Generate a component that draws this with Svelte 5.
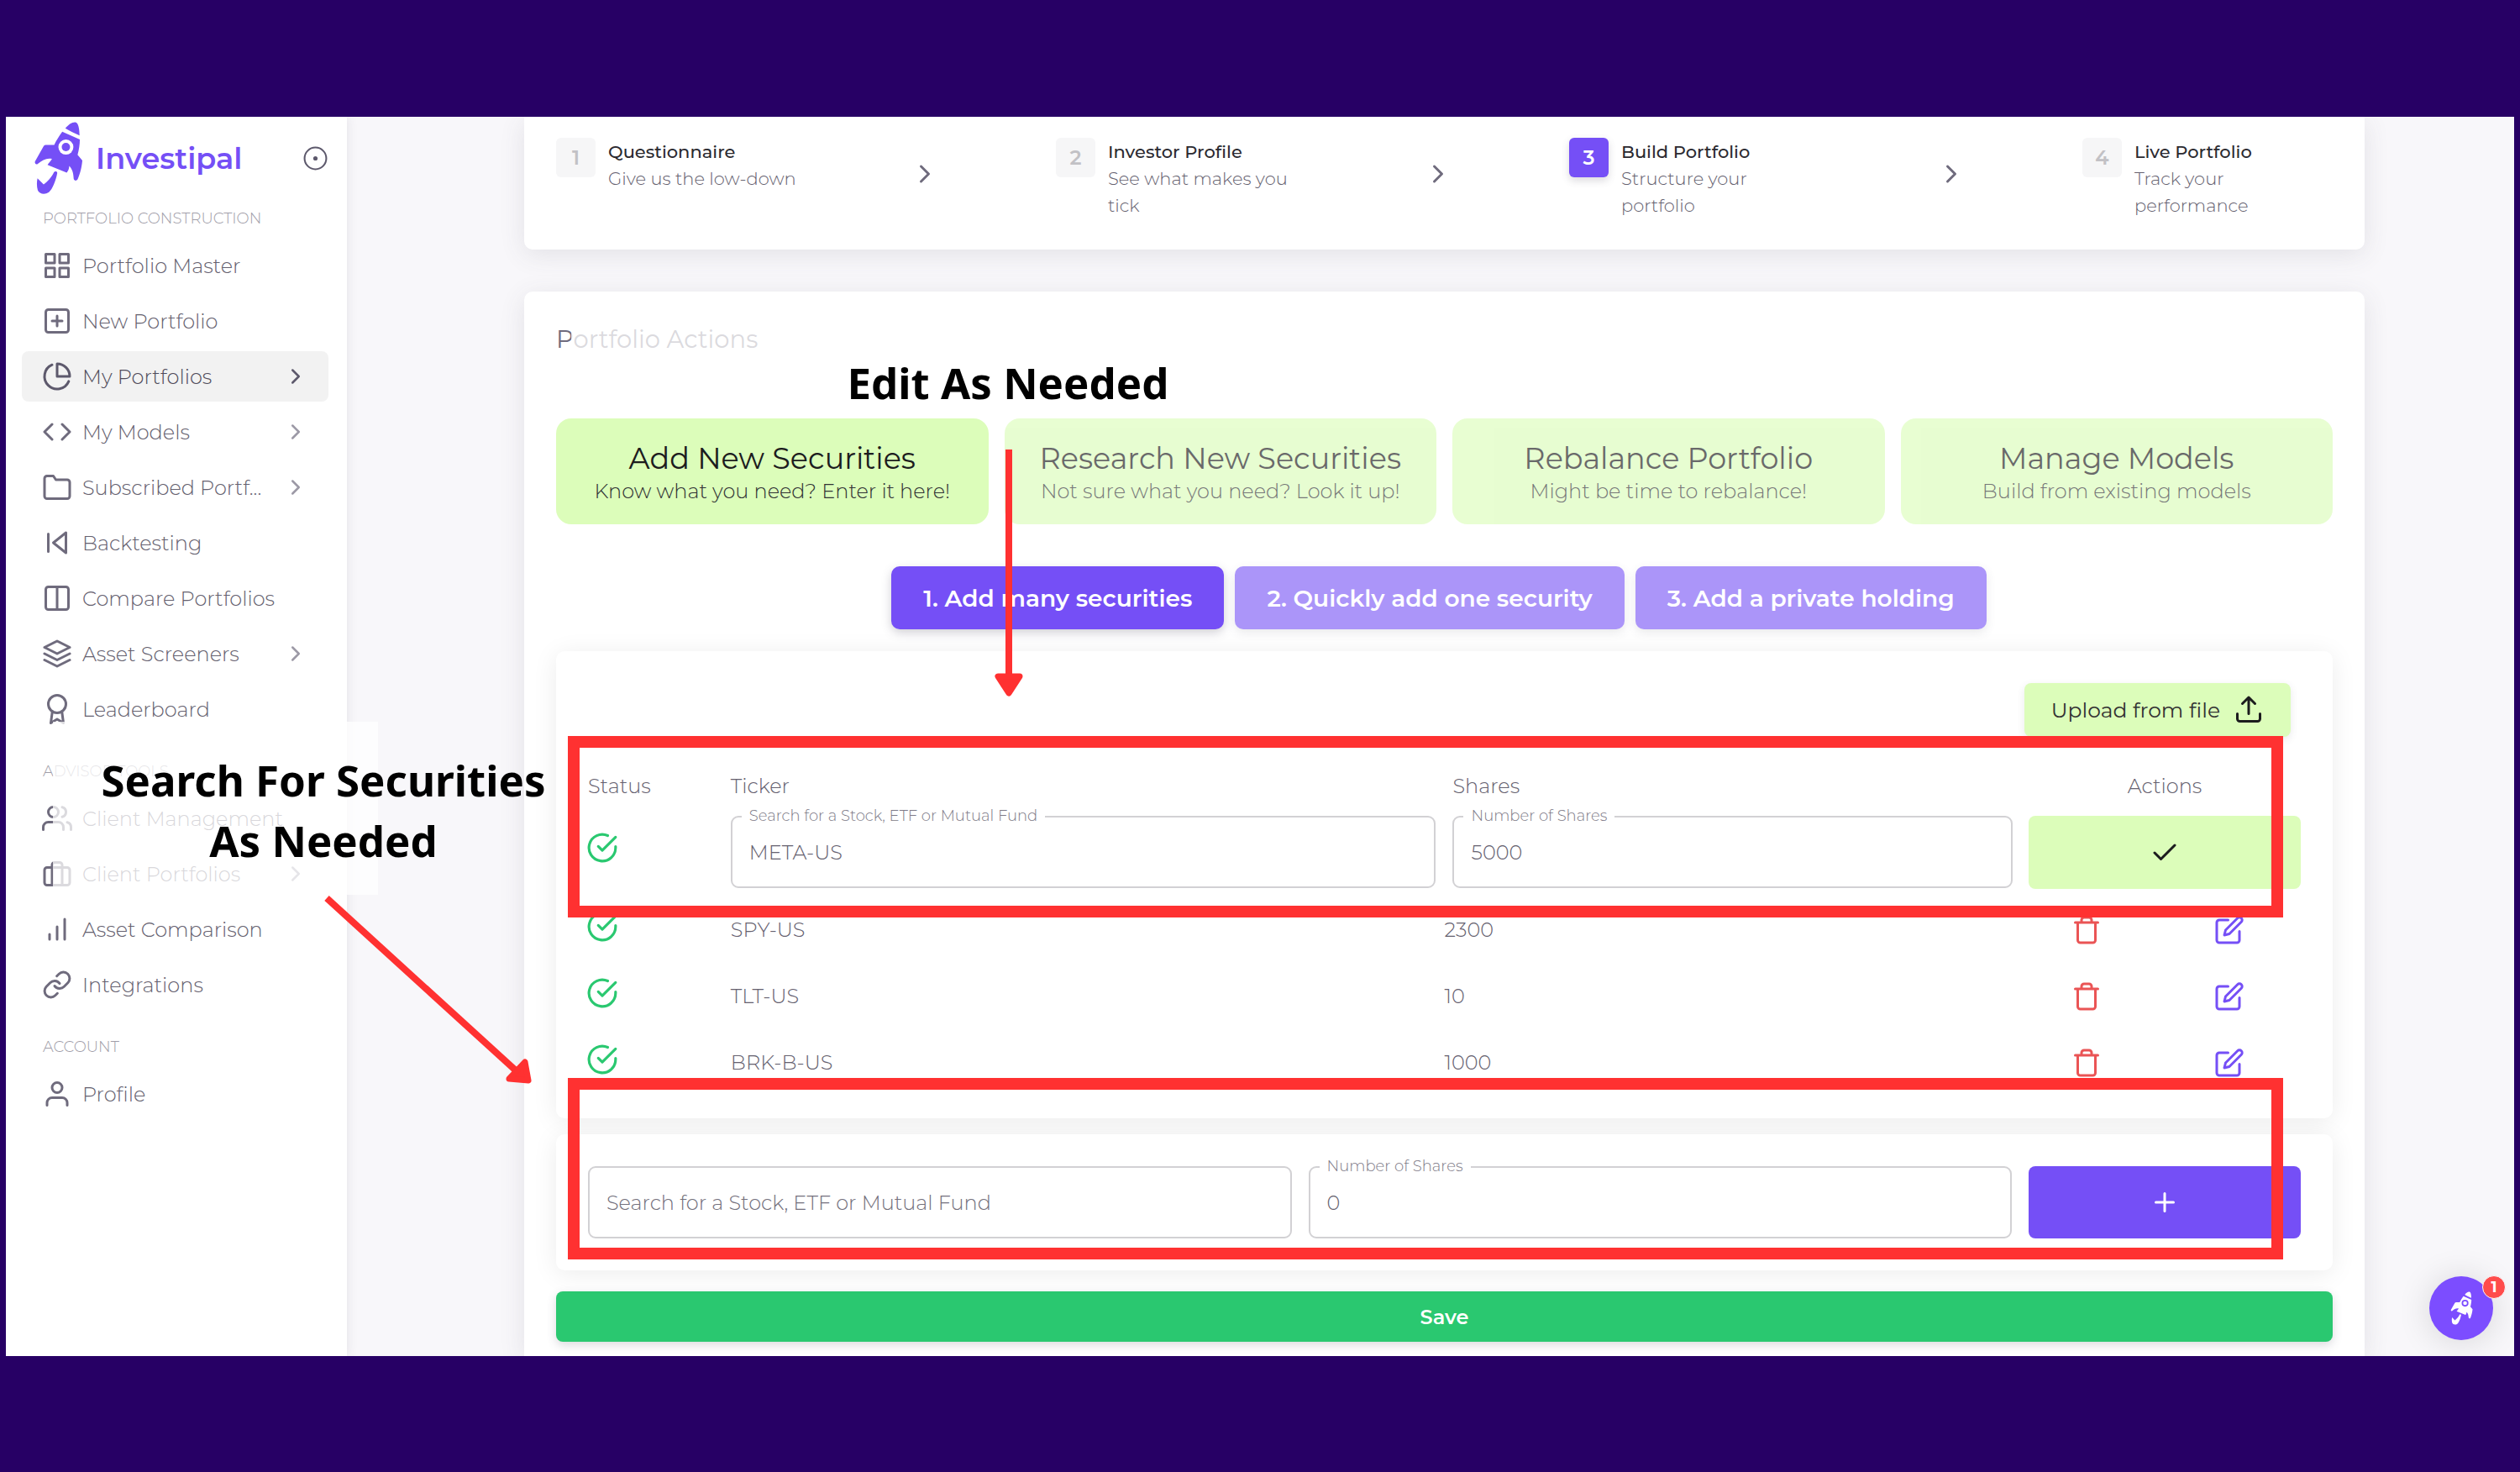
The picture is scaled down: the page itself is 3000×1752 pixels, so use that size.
<script>
  const icons = {
    grid: '<rect x="3" y="3" width="7" height="7"/><rect x="14" y="3" width="7" height="7"/><rect x="14" y="14" width="7" height="7"/><rect x="3" y="14" width="7" height="7"/>',
    plusSquare: '<rect x="3" y="3" width="18" height="18" rx="2"/><path d="M12 8v8M8 12h8"/>',
    pie: '<path d="M21.21 15.89A10 10 0 1 1 8 2.83"/><path d="M22 12A10 10 0 0 0 12 2v10z"/>',
    code: '<path d="M16 18l6-6-6-6M8 6l-6 6 6 6"/>',
    folder: '<path d="M22 19a2 2 0 0 1-2 2H4a2 2 0 0 1-2-2V5a2 2 0 0 1 2-2h5l2 3h9a2 2 0 0 1 2 2z"/>',
    skipBack: '<path d="M19 20L9 12l10-8v16zM5 19V5"/>',
    columns: '<rect x="3" y="3" width="18" height="18" rx="2"/><path d="M12 3v18"/>',
    layers: '<path d="M12 2L2 7l10 5 10-5-10-5zM2 17l10 5 10-5M2 12l10 5 10-5"/>',
    award: '<circle cx="12" cy="8" r="7"/><path d="M8.21 13.89L7 23l5-3 5 3-1.21-9.12"/>',
    users: '<path d="M17 21v-2a4 4 0 0 0-4-4H5a4 4 0 0 0-4 4v2"/><circle cx="9" cy="7" r="4"/><path d="M23 21v-2a4 4 0 0 0-3-3.87M16 3.13a4 4 0 0 1 0 7.75"/>',
    briefcase: '<rect x="2" y="7" width="20" height="14" rx="2"/><path d="M16 21V5a2 2 0 0 0-2-2h-4a2 2 0 0 0-2 2v16"/>',
    bars: '<path d="M12 20V10M18 20V4M6 20v-4"/>',
    link: '<path d="M10 13a5 5 0 0 0 7.54.54l3-3a5 5 0 0 0-7.07-7.07l-1.72 1.71"/><path d="M14 11a5 5 0 0 0-7.54-.54l-3 3a5 5 0 0 0 7.07 7.07l1.71-1.71"/>',
    user: '<path d="M20 21v-2a4 4 0 0 0-4-4H8a4 4 0 0 0-4 4v2"/><circle cx="12" cy="7" r="4"/>',
    chevron: '<path d="M9 18l6-6-6-6"/>',
    disc: '<circle cx="12" cy="12" r="10"/><circle cx="12" cy="12" r="1.2" fill="currentColor"/>',
    upload: '<path d="M21 15v4a2 2 0 0 1-2 2H5a2 2 0 0 1-2-2v-4M17 7l-5-5-5 5M12 2v13"/>',
    checkCircle: '<path d="M22 11.08V12a10 10 0 1 1-5.93-9.14"/><path d="M22 4L12 14.01l-3-3"/>',
    check: '<path d="M20 6L9 17l-5-5"/>',
    plus: '<path d="M12 5v14M5 12h14"/>',
    trash: '<path d="M3 6h18M19 6v14a2 2 0 0 1-2 2H7a2 2 0 0 1-2-2V6M8 6V4a2 2 0 0 1 2-2h4a2 2 0 0 1 2 2v2"/>',
    edit: '<path d="M11 4H4a2 2 0 0 0-2 2v14a2 2 0 0 0 2 2h14a2 2 0 0 0 2-2v-7"/><path d="M18.5 2.5a2.121 2.121 0 0 1 3 3L12 15l-4 1 1-4 9.5-9.5z"/>'
  };

  const nav = [
    { title: 'PORTFOLIO CONSTRUCTION', items: [
      { label: 'Portfolio Master', icon: 'grid' },
      { label: 'New Portfolio', icon: 'plusSquare' },
      { label: 'My Portfolios', icon: 'pie', more: true, active: true },
      { label: 'My Models', icon: 'code', more: true },
      { label: 'Subscribed Portf...', icon: 'folder', more: true },
      { label: 'Backtesting', icon: 'skipBack' },
      { label: 'Compare Portfolios', icon: 'columns' },
      { label: 'Asset Screeners', icon: 'layers', more: true },
      { label: 'Leaderboard', icon: 'award' }
    ] },
    { title: 'ADVISOR TOOLS', items: [
      { label: 'Client Management', icon: 'users' },
      { label: 'Client Portfolios', icon: 'briefcase', more: true },
      { label: 'Asset Comparison', icon: 'bars' },
      { label: 'Integrations', icon: 'link' }
    ] },
    { title: 'ACCOUNT', items: [{ label: 'Profile', icon: 'user' }] }
  ];

  const steps = [
    { title: 'Questionnaire', text: 'Give us the low-down' },
    { title: 'Investor Profile', text: 'See what makes you tick' },
    { title: 'Build Portfolio', text: 'Structure your portfolio', active: true },
    { title: 'Live Portfolio', text: 'Track your performance' }
  ];

  const actions = [
    { title: 'Add New Securities', text: 'Know what you need? Enter it here!', active: true },
    { title: 'Research New Securities', text: 'Not sure what you need? Look it up!' },
    { title: 'Rebalance Portfolio', text: 'Might be time to rebalance!' },
    { title: 'Manage Models', text: 'Build from existing models' }
  ];

  const modes = ['1. Add many securities', '2. Quickly add one security', '3. Add a private holding'];

  const holdings = [
    { ticker: 'SPY-US', shares: 2300 },
    { ticker: 'TLT-US', shares: 10 },
    { ticker: 'BRK-B-US', shares: 1000 }
  ];

  let ticker = $state('META-US');
  let shares = $state('5000');
  let newTicker = $state('');
  let newShares = $state('0');
</script>

{#snippet icon(name, kind = '')}
  <svg class="icon {kind}" viewBox="0 0 24 24" aria-hidden="true">{@html icons[name]}</svg>
{/snippet}

{#snippet rocket(kind)}
  <svg class="rocket {kind}" viewBox="30 27 178 264" aria-hidden="true">
    <path d="M144 53C154 40 168 30 180 31c10 1 14 19 15 47-17-6-36-16-51-25z" />
    <path d="M133 65l63 28c0 17-3 37-8 55l17 20c-2 27-10 52-17 68-4 6-12 6-14-2-1-19-4-34-16-46 0 10-4 18-9 24l-69-28c4-8 12-14 16-22-18-4-34 3-51 18-5 4-12 0-10-8l31-55c2-4 6-5 10-5h28c8-16 18-32 29-47z" />
    <circle class="hole" cx="146" cy="120" r="27" />
    <circle cx="146" cy="120" r="15" />
    <path d="M103 210c4-4 12-3 12 3-5 27-17 57-30 69-15 10-35 6-40-7-4-13-4-30-1-43l22 22c14-10 29-26 37-44z" />
  </svg>
{/snippet}

<div class="page">
  <div class="frame">
    <aside class="sidebar">
      <div class="brand">
        <a class="logo" href="#home">{@render rocket('brand-rocket')}<span>Investipal</span></a>
        <button class="pin" aria-label="Pin menu">{@render icon('disc', 'thin')}</button>
      </div>
      <nav>
        {#each nav as group}
          <h2>{group.title}</h2>
          <ul>
            {#each group.items as item}
              <li>
                <a class="nav-item" class:active={item.active} href="#nav">
                  {@render icon(item.icon)}
                  <span>{item.label}</span>
                  {#if item.more}{@render icon('chevron', 'small')}{/if}
                </a>
              </li>
            {/each}
          </ul>
        {/each}
      </nav>
    </aside>

    <main>
      <ol class="steps">
        {#each steps as step, i}
          <li>
            <span class="num" class:on={step.active}>{i + 1}</span>
            <div class="step-text">
              <strong>{step.title}</strong>
              <span>{step.text}</span>
            </div>
            {#if i < 3}{@render icon('chevron', 'step-arrow')}{/if}
          </li>
        {/each}
      </ol>

      <section class="panel">
        <h1>Portfolio Actions</h1>
        <div class="actions">
          {#each actions as action}
            <button class="action" class:on={action.active}>
              <span class="action-title">{action.title}</span>
              <span class="action-text">{action.text}</span>
            </button>
          {/each}
        </div>
        <div class="modes">
          {#each modes as mode, i}
            <button class="mode" class:on={i === 0}>{mode}</button>
          {/each}
        </div>

        <div class="card holdings">
          <div class="upload-row">
            <button class="upload">Upload from file {@render icon('upload')}</button>
          </div>
          <table>
            <thead>
              <tr>
                <th class="c-status">Status</th>
                <th class="c-ticker">Ticker</th>
                <th class="c-shares inset">Shares</th>
                <th class="c-actions">Actions</th>
              </tr>
            </thead>
            <tbody>
              <tr class="edit-row">
                <td class="status">{@render icon('checkCircle')}</td>
                <td class="ticker-cell">
                  <div class="field">
                    <label for="ticker">Search for a Stock, ETF or Mutual Fund</label>
                    <input id="ticker" type="text" bind:value={ticker} />
                  </div>
                </td>
                <td class="inset">
                  <div class="field">
                    <label for="shares">Number of Shares</label>
                    <input id="shares" type="text" bind:value={shares} />
                  </div>
                </td>
                <td class="confirm-cell">
                  <button class="confirm" aria-label="Confirm">{@render icon('check')}</button>
                </td>
              </tr>
              {#each holdings as h}
                <tr>
                  <td class="status">{@render icon('checkCircle')}</td>
                  <td>{h.ticker}</td>
                  <td>{h.shares}</td>
                  <td>
                    <div class="row-actions">
                      <button class="delete" aria-label="Delete {h.ticker}">{@render icon('trash')}</button>
                      <button class="edit" aria-label="Edit {h.ticker}">{@render icon('edit')}</button>
                    </div>
                  </td>
                </tr>
              {/each}
            </tbody>
          </table>
          <div class="mark mark-edit"></div>
        </div>

        <form class="card add-row" onsubmit={(e) => e.preventDefault()}>
          <div class="field">
            <input type="text" aria-label="Search for a Stock, ETF or Mutual Fund" placeholder="Search for a Stock, ETF or Mutual Fund" bind:value={newTicker} />
          </div>
          <div class="field">
            <label for="new-shares">Number of Shares</label>
            <input id="new-shares" type="text" bind:value={newShares} />
          </div>
          <button class="add" aria-label="Add security">{@render icon('plus')}</button>
          <div class="mark mark-search"></div>
        </form>

        <button class="save">Save</button>

        <p class="note note-edit">Edit As Needed</p>
        <svg class="arrow arrow-down" viewBox="0 0 34 294" aria-hidden="true">
          <path class="shaft" d="M17 0v272" />
          <path class="head" d="M4 270h26L17 290z" />
        </svg>
      </section>
    </main>

    <div class="veil"></div>
    <p class="note note-search">Search For Securities<br />As Needed</p>
    <svg class="arrow arrow-side" viewBox="0 0 250 230" aria-hidden="true">
      <path class="shaft" d="M4 4l226 206" />
      <path class="head" d="M240 199l4 22-23-2z" />
    </svg>

    <button class="chat" aria-label="Open chat">
      {@render rocket('chat-rocket')}
      <span class="badge">1</span>
    </button>
  </div>
</div>

<style>
  :global(body) { background: #270065; }
  .page, .page * { box-sizing: border-box; }
  .page {
    min-height: 100vh;
    padding: 139px 7px 140px;
    background: #270065;
    font-family: Montserrat, Inter, "Open Sans", sans-serif;
    font-size: 24px;
    font-weight: 300;
    color: #65616f;
  }
  button, input { font: inherit; color: inherit; }
  button { border: 0; padding: 0; background: none; cursor: pointer; }
  a { color: inherit; text-decoration: none; }
  ul, ol { list-style: none; margin: 0; padding: 0; }
  h1, h2, p { margin: 0; }

  .frame {
    position: relative;
    display: flex;
    min-height: calc(100vh - 279px);
    background: #f8f7fa;
    overflow: hidden;
  }

  .icon {
    width: 36px;
    height: 36px;
    flex: none;
    display: block;
    fill: none;
    stroke: currentColor;
    stroke-width: 2;
    stroke-linecap: round;
    stroke-linejoin: round;
  }
  .small { width: 30px; height: 30px; }
  .thin { width: 31px; height: 31px; stroke-width: 1.6; color: #5d596c; }

  .sidebar {
    width: 406px;
    flex: none;
    background: #fff;
    box-shadow: 0 0 12px rgba(75, 70, 92, 0.13);
    padding: 0 22px 0 19px;
  }
  .brand { display: flex; align-items: center; justify-content: space-between; height: 98px; padding-left: 14px; }
  .logo { display: flex; align-items: center; gap: 15px; color: #754ff6; font-size: 35px; font-weight: 600; }
  .rocket { display: block; fill: currentColor; }
  .rocket .hole { fill: #fff; }
  .brand-rocket { width: 59px; height: 88px; }
  nav h2 { font-size: 18px; font-weight: 300; line-height: 24px; margin: 32px 0 14px; padding-left: 25px; color: #a09da8; }
  nav h2:first-child { margin-top: 11px; }
  nav ul { display: grid; grid-template-columns: minmax(0, 1fr); gap: 6px; }
  .nav-item { display: flex; align-items: center; height: 60px; gap: 12px; padding: 0 24px; border-radius: 8px; }
  .nav-item .icon { color: #6f6b7d; }
  .nav-item span { flex: 1; min-width: 0; white-space: nowrap; }
  .nav-item .small { color: #9c99a6; }
  .active { background: #f2f2f2; color: #4f4b5a; }
  .nav-item.active .icon { color: #5d596c; }

  main { flex: 1; min-width: 0; padding: 0 178px 0 211px; }
  .steps {
    display: grid;
    grid-template-columns: 595fr 611fr 611fr 298fr;
    padding: 25px 38px 36px;
    background: #fff;
    border-radius: 0 0 10px 10px;
    box-shadow: 0 6px 30px rgba(75, 70, 92, 0.12);
  }
  .steps li { display: flex; gap: 15px; }
  .num {
    width: 47px; height: 47px; flex: none;
    display: grid; place-items: center;
    border-radius: 6px; background: #f6f6f7; color: #c2c1c5;
    font-weight: 600;
  }
  .num.on { background: #754ff6; color: #fff; box-shadow: 0 4px 10px rgba(75, 70, 92, 0.2); }
  .step-text { width: 230px; padding-top: 1px; font-size: 21px; line-height: 32px; display: flex; flex-direction: column; }
  .step-text strong { font-weight: 500; color: #2b2a30; }
  .step-arrow { margin: 25px 138px 0 auto; color: #6f6b7d; }

  .panel {
    position: relative;
    margin-top: 50px;
    padding: 37px 38px 17px;
    background: #fff;
    border-radius: 10px 10px 0 0;
    box-shadow: 0 6px 30px rgba(75, 70, 92, 0.12);
  }
  h1 { font-size: 29px; font-weight: 400; line-height: 40px; color: #6f6b7d; }
  .actions { display: grid; grid-template-columns: repeat(4, 1fr); gap: 19px; margin-top: 74px; }
  .action {
    height: 126px; padding-top: 5px;
    display: flex; flex-direction: column; align-items: center; justify-content: center;
    border-radius: 18px; background: #dcfdba; color: #1c1c1e; opacity: 0.66;
  }
  .action.on { opacity: 1; }
  .action-title { font-size: 35px; font-weight: 400; line-height: 42px; }
  .action-text { line-height: 35px; color: #303234; }
  .modes { display: flex; justify-content: center; gap: 13px; margin: 50px 13px 26px 0; }
  .mode {
    height: 75px; padding: 0 38px; border-radius: 10px;
    background: #ab95f9; color: #fff; font-size: 28px; font-weight: 600;
    box-shadow: 0 4px 12px rgba(75, 70, 92, 0.12);
  }
  .mode.on { background: #754ff6; box-shadow: 0 4px 12px rgba(75, 70, 92, 0.26); }

  .card { position: relative; background: #fff; border-radius: 10px; box-shadow: 0 4px 30px rgba(0, 0, 0, 0.08); padding: 38px; }
  .holdings { padding-bottom: 27px; }
  .upload-row { display: flex; justify-content: flex-end; padding-right: 12px; }
  .upload {
    display: flex; align-items: center; gap: 16px; height: 64px; padding: 0 32px;
    border-radius: 8px; background: #dcfdba; color: #333; font-size: 25px; font-weight: 400;
    box-shadow: 0 3px 10px rgba(75, 70, 92, 0.12);
  }
  .upload .icon { color: #1c1c1e; }
  table { width: 100%; margin-top: 23px; border-collapse: collapse; table-layout: fixed; }
  th { height: 71px; padding: 0; font-weight: 300; text-align: left; }
  .c-status { width: 8.33%; }
  .c-ticker { width: 41.67%; }
  .c-shares { width: 33.33%; }
  .c-actions { width: 16.67%; padding-left: 16px; text-align: center; }
  td { height: 79px; padding: 0; vertical-align: middle; }
  .status { padding-bottom: 8px; color: #2ac870; }
  .status .icon { width: 38px; height: 38px; margin-left: -2px; }
  .edit-row td { height: 96px; vertical-align: top; }
  .edit-row .status { padding-top: 19px; }
  .ticker-cell { padding-right: 10px; }
  .inset { padding: 0 3px 0 10px; }
  .confirm-cell { padding-left: 16px; }
  .field { position: relative; }
  .field label {
    position: absolute; left: 13px; top: -12px; padding: 0 9px;
    background: #fff; font-size: 18px; line-height: 24px; color: #7d7a87;
  }
  .field input {
    width: 100%; height: 86px; display: block; padding: 0 20px;
    border: 2px solid #d2d1d4; border-radius: 9px; background: #fff; outline: none;
  }
  .field input::placeholder { color: #73707c; opacity: 1; }
  .confirm, .add { width: 100%; height: 87px; display: grid; place-items: center; border-radius: 8px; background: #dcfdba; color: #1c1c1e; }
  .row-actions { display: grid; grid-template-columns: 1fr 1fr; justify-items: center; }
  .delete { color: #ea5455; }
  .edit { color: #754ff6; }

  .add-row { display: grid; grid-template-columns: 838fr 838fr 324fr; gap: 20px; margin: 19px 0 25px; }
  .add { height: 86px; background: #754ff6; color: #fff; }
  .save {
    display: block; width: 100%; height: 60px; border-radius: 8px;
    background: #2ac870; color: #fff; font-weight: 600;
    box-shadow: 0 4px 12px rgba(75, 70, 92, 0.2);
  }

  .mark { position: absolute; left: 14px; right: 59px; height: 216px; border: 14px solid #ff3131; pointer-events: none; }
  .mark-edit { top: 101px; }
  .mark-search { top: -67px; }
  .note {
    position: absolute;
    font-family: "Noto Sans", sans-serif; font-weight: 700; font-size: 51px; line-height: 72px;
    color: #000; text-align: center;
  }
  .note-edit { left: 56px; top: 30px; width: 1040px; height: 117px; padding-top: 42px; background: rgba(255, 255, 255, 0.75); }
  .note-search { left: 98px; top: 753px; width: 560px; }
  .veil { position: absolute; left: 56px; top: 720px; width: 387px; height: 206px; background: rgba(255, 255, 255, 0.75); }
  .arrow { position: absolute; overflow: visible; pointer-events: none; }
  .shaft { fill: none; stroke: #ff3131; stroke-width: 8; }
  .head { fill: #ff3131; stroke: #ff3131; stroke-width: 7; stroke-linejoin: round; }
  .arrow-down { left: 560px; top: 188px; width: 34px; height: 294px; }
  .arrow-side { left: 378px; top: 926px; width: 250px; height: 230px; }

  .chat {
    position: absolute; right: 25px; bottom: 19px; width: 76px; height: 76px;
    display: grid; place-items: center; border-radius: 50%;
    background: #7c4dff; color: #fff; box-shadow: 0 2px 40px rgba(0, 0, 0, 0.14);
  }
  .chat-rocket { width: 27px; height: 40px; }
  .chat .rocket .hole { fill: #7c4dff; }
  .badge {
    position: absolute; right: -15px; top: -1px; width: 28px; height: 28px;
    display: grid; place-items: center; border-radius: 50%;
    background: #ff4c4c; border: 1px solid #f8f7fa; font-size: 18px; font-weight: 700;
  }
</style>
